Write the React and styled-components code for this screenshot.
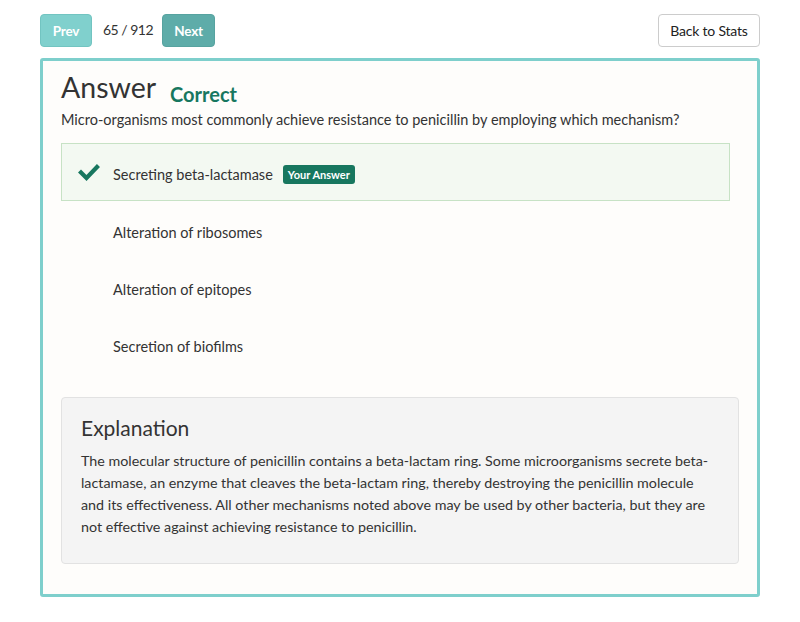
import React from "react";
import styled, { createGlobalStyle } from "styled-components";

const Global = createGlobalStyle`
  html, body { margin: 0; padding: 0; background: #fff; }
  body { font-family: Lato, "Open Sans", sans-serif; color: #333; }
`;

const Page = styled.div`
  width: 720px;
  padding: 14px 40px 24px;
`;

const Toolbar = styled.div`
  display: flex;
  align-items: center;
  height: 33px;
  margin-bottom: 11px;
`;

const NavButton = styled.button`
  width: ${p => p.$w}px;
  height: 33px;
  padding: 0;
  border: 1px solid ${p => p.$border};
  border-radius: 4px;
  background: ${p => p.$bg};
  color: #fff;
  font-family: inherit;
  font-weight: 700;
  font-size: 13.5px;
  letter-spacing: -0.2px;
`;

const Counter = styled.span`
  font-size: 14px;
  letter-spacing: -0.5px;
  color: #333;
  margin: -3px 9px 0 11px;
`;

const Spacer = styled.div`flex: 1;`;

const BackButton = styled.button`
  width: 102px;
  height: 33px;
  padding: 0;
  border: 1px solid #ccc;
  border-radius: 4px;
  background: #fff;
  color: #222;
  font-family: inherit;
  font-size: 14px;
  letter-spacing: -0.2px;
`;

const Card = styled.div`
  border: 3px solid #7ecfcc;
  border-radius: 3px;
  background: #fefdfb;
  padding: 8px 18px 30px;
`;

const TitleRow = styled.div`
  display: flex;
  align-items: baseline;
  gap: 14px;
`;

const Title = styled.h1`
  margin: 0;
  font-size: 28.5px;
  font-weight: 400;
  color: #333;
  line-height: 36px;
`;

const Status = styled.span`
  font-size: 20px;
  font-weight: 700;
  color: #17775f;
  position: relative;
  top: 4px;
`;

const Question = styled.p`
  margin: 5px 0 13px;
  font-size: 14.5px;
  line-height: 20px;
  color: #333;
`;

const OptionList = styled.div`
  margin-right: 9px;
`;

const Option = styled.div`
  display: flex;
  align-items: center;
  box-sizing: border-box;
  height: ${p => (p.$selected ? 58 : 57)}px;
  padding: 5px 0 0 16px;
  border: 1px solid ${p => (p.$selected ? "#c7e2c5" : "transparent")};
  background: ${p => (p.$selected ? "#f3f9f2" : "transparent")};
  font-size: 14.5px;
  color: #333;
`;

const IconSlot = styled.span`
  width: 35px;
  display: flex;
  align-items: center;
  margin-top: -5px;
`;

const Badge = styled.span`
  margin-left: 10px;
  background: #17775f;
  color: #fff;
  font-size: 11px;
  font-weight: 700;
  padding: 3px 5px;
  border-radius: 3px;
`;

const Explanation = styled.div`
  margin-top: 25px;
  background: #f4f4f4;
  border: 1px solid #e2e2e2;
  border-radius: 4px;
  padding: 15px 19px 25px;
`;

const ExplTitle = styled.h2`
  margin: 0 0 7px;
  font-size: 21px;
  font-weight: 400;
  color: #333;
  line-height: 30px;
`;

const ExplText = styled.p`
  margin: 0;
  font-size: 14.3px;
  line-height: 22px;
  color: #333;
`;

const Check = () => (
  <svg width="22" height="17" viewBox="0 0 22 17">
    <polyline points="3,8.5 8.5,14 19,3" fill="none" stroke="#17775f" strokeWidth="4.2" strokeLinecap="square" />
  </svg>
);

const options = [
  "Secreting beta-lactamase",
  "Alteration of ribosomes",
  "Alteration of epitopes",
  "Secretion of biofilms",
];

export default function App() {
  return (
    <>
      <Global />
      <Page>
        <Toolbar>
          <NavButton $bg="#80d0cd" $border="#72c4c1" $w={52}>Prev</NavButton>
          <Counter>65 / 912</Counter>
          <NavButton $bg="#5eaca9" $border="#57a3a0" $w={53}>Next</NavButton>
          <Spacer />
          <BackButton>Back to Stats</BackButton>
        </Toolbar>
        <Card>
          <TitleRow>
            <Title>Answer</Title>
            <Status>Correct</Status>
          </TitleRow>
          <Question>
            Micro-organisms most commonly achieve resistance to penicillin by employing which mechanism?
          </Question>
          <OptionList>
            {options.map((o, i) => (
              <Option key={o} $selected={i === 0}>
                <IconSlot>{i === 0 && <Check />}</IconSlot>
                {o}
                {i === 0 && <Badge>Your Answer</Badge>}
              </Option>
            ))}
          </OptionList>
          <Explanation>
            <ExplTitle>Explanation</ExplTitle>
            <ExplText>
              The molecular structure of penicillin contains a beta-lactam ring. Some microorganisms secrete beta-lactamase, an enzyme that cleaves the beta-lactam ring, thereby destroying the penicillin molecule and its effectiveness. All other mechanisms noted above may be used by other bacteria, but they are not effective against achieving resistance to penicillin.
            </ExplText>
          </Explanation>
        </Card>
      </Page>
    </>
  );
}
